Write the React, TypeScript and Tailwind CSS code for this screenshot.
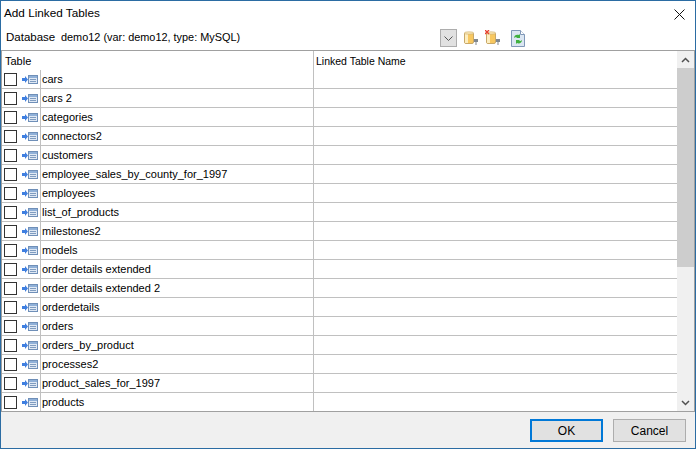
const rows = ["cars","cars 2","categories","connectors2","customers","employee_sales_by_county_for_1997","employees","list_of_products","milestones2","models","order details extended","order details extended 2","orderdetails","orders","orders_by_product","processes2","product_sales_for_1997","products"];

function RowIcon() {
  return (
    <svg width="17" height="9" viewBox="0 0 17 9" className="shrink-0">
      <path d="M1 3h3V1l3 3.500L4 8V6H1z" fill="#3f7fe0" />
      <rect x="7.500" y="0.500" width="9" height="8" fill="#dfe8f4" stroke="#6f8fb8" />
      <rect x="8" y="1" width="8" height="2" fill="#8fb0d8" />
      <path d="M9 4.500h6M9 6.500h6" stroke="#7f9cc0" />
    </svg>
  );
}

function Db({ x }: { x?: boolean }) {
  return (
    <svg width="16" height="16" viewBox="0 0 16 16">
      <rect x="1.500" y="2.500" width="9" height="11" rx="1.500" fill="#f8c860" stroke="#c8a868" />
      <rect x="2" y="3" width="3" height="10" fill="#fdeec0" />
      <ellipse cx="6" cy="3" rx="4.500" ry="1.200" fill="#fbe9b8" stroke="#c8a868" strokeWidth="0.6" />
      <path d="M11 9h4v3h-1.500v3h-1v-3H11z" fill="#808890" />
      {x ? <path d="M0 0l4 4M4 0L0 4" stroke="#e84030" strokeWidth="1.300" /> : null}
    </svg>
  );
}

function Refresh() {
  return (
    <svg width="14" height="17" viewBox="0 0 14 17">
      <path d="M.5.500h9l4 4v12H.5z" fill="#dbe6f2" stroke="#8098b8" />
      <path d="M9.500.500v4h4" fill="#fff" stroke="#8098b8" />
      <path d="M3 8c0-3 3-4 5-3l1-1v4H5l1-1c-1 0-2 0-3 1z" fill="#40b040" />
      <path d="M11 10c0 3-3 4-5 3l-1 1v-4h4l-1 1c1 0 2 0 3-1z" fill="#40b040" />
    </svg>
  );
}

export default function App() {
  return (
    <div className="w-[696px] h-[449px] flex flex-col bg-white border border-[#2b6ca3] text-[11px] text-black overflow-hidden" style={{ fontFamily: '"Liberation Sans", Arial, sans-serif' }}>
      <div className="h-[26px] shrink-0 flex items-center justify-between pl-[3px] pr-[10px]">
        <span className="text-[11.750px] -mt-[2px]">Add Linked Tables</span>
        <svg width="11" height="11" viewBox="0 0 11 11"><path d="M.5.500l10 10M10.500.500l-10 10" stroke="#111" /></svg>
      </div>
      <div className="h-[23px] shrink-0 flex items-center pl-[5px]">
        <span className="w-[55px] text-[11.500px] -mt-[2px]">Database</span>
        <span className="w-[379px] text-[10.900px] -mt-[2px]">demo12 (var: demo12, type: MySQL)</span>
        <div className="flex items-center -mt-[1px]">
          <div className="w-[17px] h-[18px] border border-[#adadad] bg-[#e1e1e1] flex items-center justify-center">
            <svg width="9" height="5" viewBox="0 0 9 5"><path d="M.5.500l4 4 4-4" fill="none" stroke="#555" /></svg>
          </div>
          <div className="ml-[6px] w-[16px] flex"><Db /></div>
          <div className="ml-[6px] w-[16px] flex"><Db x /></div>
          <div className="ml-[10px] flex"><Refresh /></div>
        </div>
      </div>
      <div className="h-[362px] shrink-0 border border-[#a0a0a0] bg-white flex overflow-hidden">
        <div className="w-[676px] flex flex-col">
          <div className="h-[19px] shrink-0 flex text-[10.500px]">
            <span className="w-[311px] pl-[3px] pt-[2px] text-[11px]">Table</span>
            <span className="flex-1 border-l border-[#c0c0c0] pl-[2px] pt-[3px]">Linked Table Name</span>
          </div>
          {rows.map((r) => (
            <div key={r} className="h-[19px] shrink-0 flex border-b border-[#c0c0c0]">
              <div className="w-[38px] shrink-0 flex items-center pl-[2px] gap-[4px]">
                <div className="w-[13px] h-[13px] border border-[#333] bg-white shrink-0" />
                <RowIcon />
              </div>
              <div className="w-[273px] shrink-0 border-l border-[#c0c0c0] pl-[1px] flex items-center whitespace-nowrap">{r}</div>
              <div className="flex-1 border-l border-[#c0c0c0]" />
            </div>
          ))}
        </div>
        <div className="w-[17px] shrink-0 bg-[#f0f0f0] flex flex-col">
          <div className="h-[17px] shrink-0 flex items-center justify-center">
            <svg width="9" height="6" viewBox="0 0 9 6"><path d="M1 5l3.500-3.500L8 5" fill="none" stroke="#505050" strokeWidth="1.500" /></svg>
          </div>
          <div className="h-[199px] shrink-0 bg-[#cdcdcd]" />
          <div className="flex-1" />
          <div className="h-[17px] shrink-0 flex items-center justify-center">
            <svg width="9" height="6" viewBox="0 0 9 6"><path d="M1 1l3.500 3.500L8 1" fill="none" stroke="#505050" strokeWidth="1.500" /></svg>
          </div>
        </div>
      </div>
      <div className="flex-1 bg-[#f0f0f0] flex items-start justify-end pt-[7px] pr-[9px] gap-[10px]">
        <button className="w-[73px] h-[23px] border-2 border-[#0078d7] bg-[#e1e1e1] text-[12px]">OK</button>
        <button className="w-[73px] h-[23px] border border-[#adadad] bg-[#e1e1e1] text-[12px]">Cancel</button>
      </div>
    </div>
  );
}
